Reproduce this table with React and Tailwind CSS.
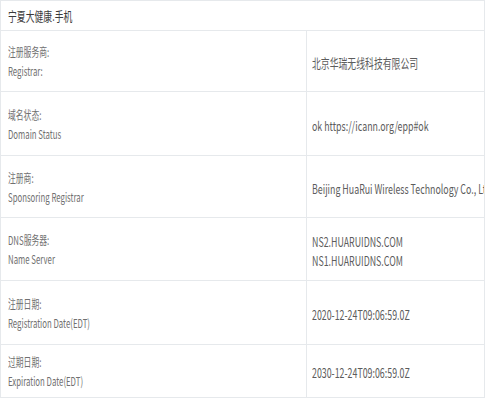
const rows = [
  { zh: "注册服务商:", en: "Registrar:", value: ["北京华瑞无线科技有限公司"], h: "h-[61px]" },
  { zh: "域名状态:", en: "Domain Status", value: ["ok https://icann.org/epp#ok"], h: "h-[64px]" },
  { zh: "注册商:", en: "Sponsoring Registrar", value: ["Beijing HuaRui Wireless Technology Co., Ltd."], h: "h-[62px]" },
  { zh: "DNS服务器:", en: "Name Server", value: ["NS2.HUARUIDNS.COM", "NS1.HUARUIDNS.COM"], h: "h-[63px]" },
  { zh: "注册日期:", en: "Registration Date(EDT)", value: ["2020-12-24T09:06:59.0Z"], h: "h-[64px]" },
  { zh: "过期日期:", en: "Expiration Date(EDT)", value: ["2030-12-24T09:06:59.0Z"], h: "h-[53px]" },
];

const font = { fontFamily: '"Noto Sans CJK SC", "Noto Sans", sans-serif' };

export default function App() {
  return (
    <div className="w-[485px] h-[400px] bg-white overflow-hidden" style={font}>
      <div className="w-[485px] border border-[#e6e9ec]">
        <div className="h-[29px] flex items-center pl-[7px]">
          <span className="text-[13px] leading-none text-[#3a3a3a] scale-x-[0.68] origin-left whitespace-nowrap">
            宁夏大健康.手机
          </span>
        </div>
        {rows.map((r) => (
          <div key={r.en} className={`grid grid-cols-[306px_1fr] border-t border-[#e6e9ec] ${r.h}`}>
            <div className="border-r border-[#e6e9ec] flex flex-col justify-center pl-[7px]">
              <span className="text-[12px] leading-[19px] text-[#707070] scale-x-[0.65] origin-left whitespace-nowrap">
                {r.zh}
              </span>
              <span className="text-[12px] leading-[19px] text-[#707070] scale-x-[0.65] origin-left whitespace-nowrap">
                {r.en}
              </span>
            </div>
            <div className="flex flex-col justify-center pl-[5px] pt-[3px] overflow-hidden">
              {r.value.map((v) => (
                <span
                  key={v}
                  className="text-[13px] leading-[19px] text-[#5c5c5c] scale-x-[0.68] origin-left whitespace-nowrap"
                >
                  {v}
                </span>
              ))}
            </div>
          </div>
        ))}
      </div>
    </div>
  );
}
